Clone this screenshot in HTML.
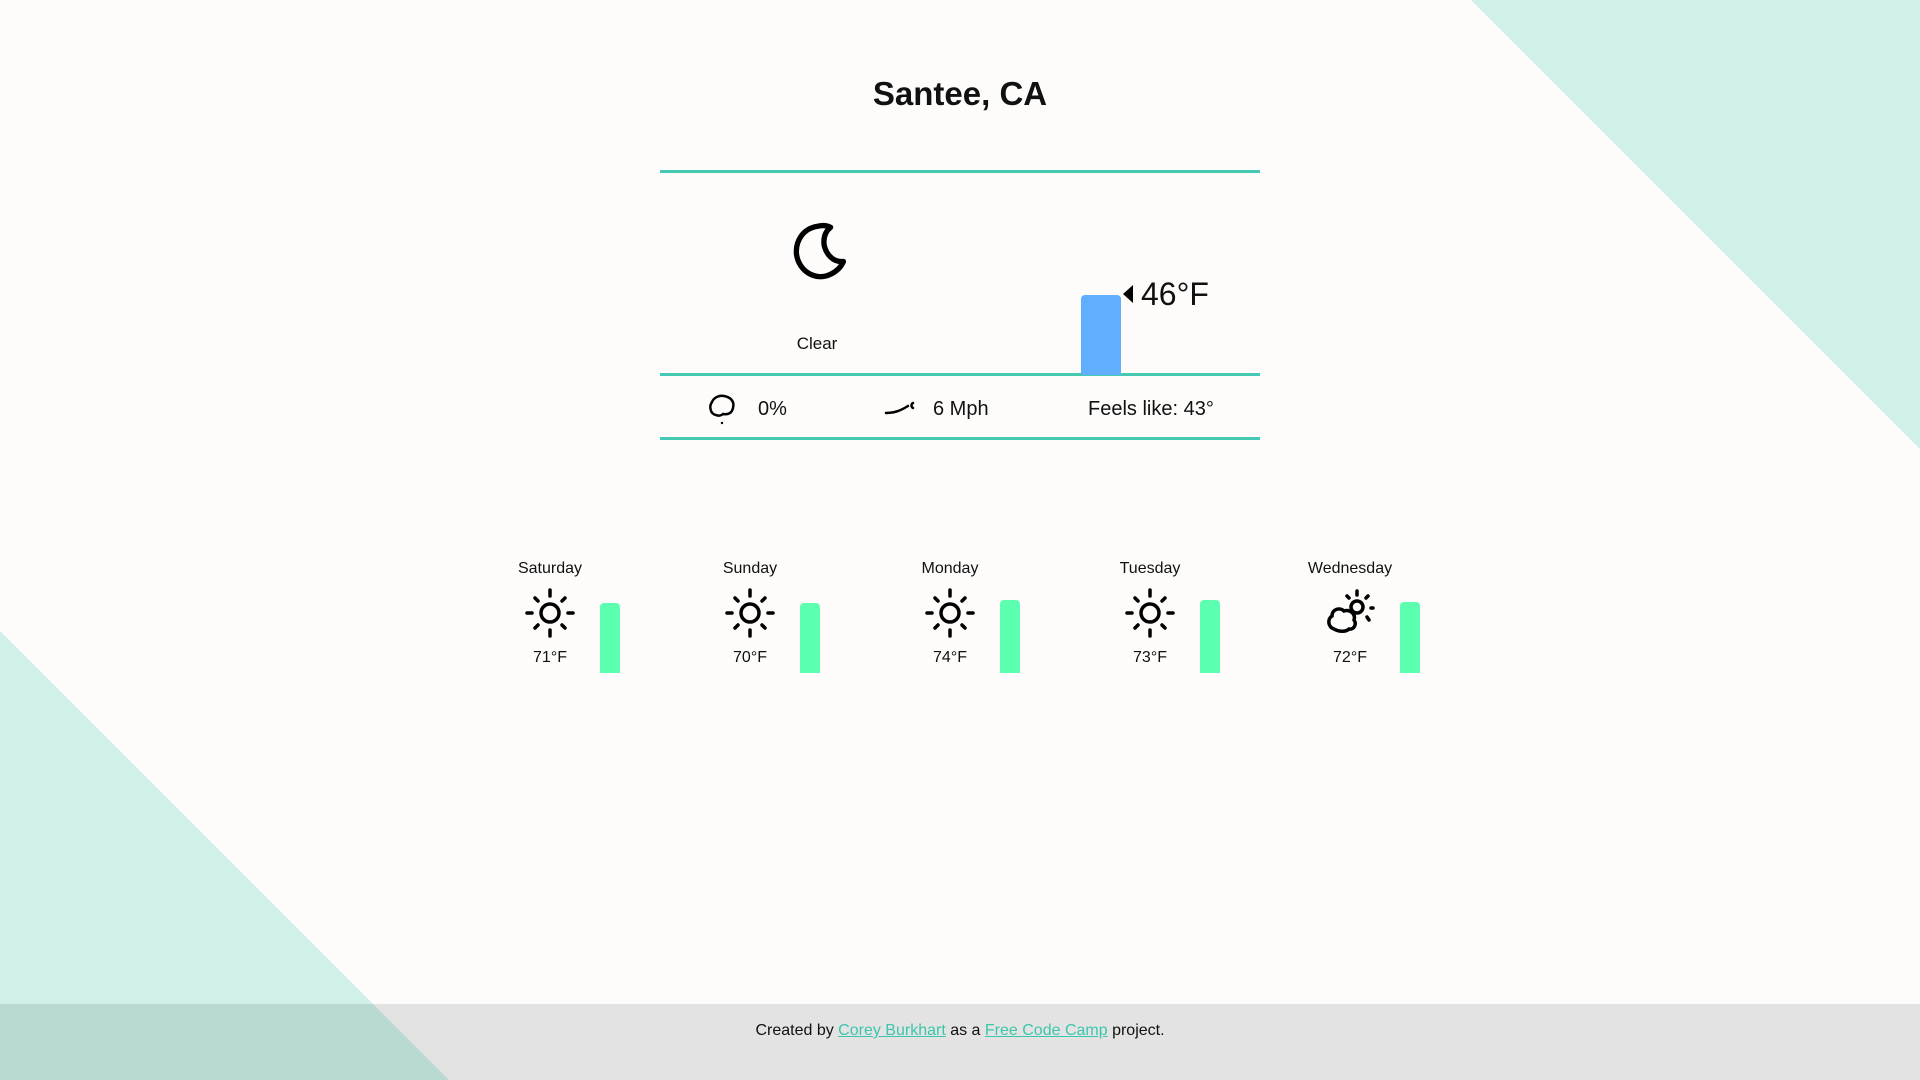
<!DOCTYPE html>
<html><head><meta charset="utf-8"><style>
html,body{margin:0;padding:0;}
body{width:1920px;height:1080px;position:relative;overflow:hidden;background:#fdfcfb;font-family:"Liberation Sans",sans-serif;color:#111;}
.abs{position:absolute;}
h1{position:absolute;top:75px;left:0;width:1920px;text-align:center;margin:0;font-size:33px;font-weight:bold;}
.line{position:absolute;left:660px;width:600px;height:3px;background:#45c9b1;}
.c{position:absolute;text-align:center;}
.footer{position:absolute;left:0;top:1004px;width:1920px;height:76px;background:#e3e3e3;}
.ft{position:absolute;top:1022px;width:1920px;text-align:center;font-size:16px;}
.ft a{color:#3cc6ac;text-decoration:underline;}
.bar{position:absolute;width:20px;background:#5cffb0;border-radius:4px 4px 0 0;}
</style></head><body>
<svg class="abs" style="left:0;top:0" width="1920" height="1080">
<polygon points="1471,0 1920,0 1920,449" fill="#d0f0e9"/>
<polygon points="0,631 449,1080 0,1080" fill="#d0f0e9"/>
</svg>
<div class="footer"></div>
<svg class="abs" style="left:0;top:0" width="1920" height="1080">
<polygon points="0,1004 373,1004 449,1080 0,1080" fill="#b9d9d3"/>
</svg>
<div class="ft">Created by <a>Corey Burkhart</a> as a <a>Free Code Camp</a> project.</div>

<h1>Santee, CA</h1>
<div class="line" style="top:170px"></div>
<div class="line" style="top:373px"></div>
<div class="line" style="top:437px"></div>

<svg class="abs" style="left:790px;top:222px" width="62" height="64" viewBox="0 0 54 60">
<path d="M24 4 C10 6 3 18 4 30 C6 46 22 56 36 49 C42 46 46 42 48 37 C38 38 32 30 30 22 C29 15 31 9 36 5 C32 3 28 3 24 4 Z" fill="none" stroke="#000" stroke-width="5" stroke-linejoin="round"/>
</svg>
<div class="c" style="left:760px;top:334px;width:114px;font-size:17px;">Clear</div>

<div class="abs" style="left:1081px;top:295px;width:40px;height:80px;background:#60aefe;border-radius:4px 4px 0 0;"></div>
<svg class="abs" style="left:1121px;top:284px" width="14" height="20"><polygon points="12,1 12,19 2,10" fill="#000"/></svg>
<div class="abs" style="left:1141px;top:276px;font-size:32px;">46°F</div>

<svg class="abs" style="left:708px;top:393px" width="28" height="32" viewBox="0 0 28 32">
<path d="M8 22 C2 21 1 13 4 9 C6 4 12 2 16 3 C22 4 27 8 25 15 C24 20 20 22 15 21 C13 23 10 23 8 22 Z" fill="none" stroke="#000" stroke-width="2.5"/>
<circle cx="14" cy="30" r="1.2" fill="#000"/>
</svg>
<div class="abs" style="left:758px;top:398px;font-size:20px;">0%</div>
<svg class="abs" style="left:884px;top:398px" width="32" height="20" viewBox="0 0 32 20">
<path d="M2 15 C10 15 16 13 24 8" fill="none" stroke="#000" stroke-width="2.5" stroke-linecap="round"/>
<path d="M29 5 C27 6 27 9 29 10" fill="none" stroke="#000" stroke-width="2.5" stroke-linecap="round"/>
</svg>
<div class="abs" style="left:933px;top:398px;font-size:20px;">6 Mph</div>
<div class="abs" style="left:1088px;top:398px;font-size:20px;">Feels like: 43°</div>

<div class="c" style="left:490px;top:560px;width:120px;font-size:16px;">Saturday</div>
<div class="c" style="left:690px;top:560px;width:120px;font-size:16px;">Sunday</div>
<div class="c" style="left:890px;top:560px;width:120px;font-size:16px;">Monday</div>
<div class="c" style="left:1090px;top:560px;width:120px;font-size:16px;">Tuesday</div>
<div class="c" style="left:1290px;top:560px;width:120px;font-size:16px;">Wednesday</div>

<svg width="0" height="0" style="position:absolute"><defs>
<g id="sun" fill="none" stroke="#000" stroke-width="3.5" stroke-linecap="round">
<circle cx="25" cy="25" r="9"/>
<line x1="25" y1="2" x2="25" y2="8"/><line x1="25" y1="42" x2="25" y2="48"/>
<line x1="2" y1="25" x2="7" y2="25"/><line x1="43" y1="25" x2="48" y2="25"/>
<line x1="10" y1="10" x2="13" y2="13"/><line x1="37" y1="37" x2="40" y2="40"/>
<line x1="40" y1="10" x2="37" y2="13"/><line x1="13" y1="37" x2="10" y2="40"/>
</g></defs></svg>
<svg class="abs" style="left:525px;top:588px" width="50" height="50"><use href="#sun"/></svg>
<svg class="abs" style="left:725px;top:588px" width="50" height="50"><use href="#sun"/></svg>
<svg class="abs" style="left:925px;top:588px" width="50" height="50"><use href="#sun"/></svg>
<svg class="abs" style="left:1125px;top:588px" width="50" height="50"><use href="#sun"/></svg>
<svg class="abs" style="left:1324px;top:587px" width="52" height="50" viewBox="0 0 52 50">
<g fill="none" stroke="#000" stroke-width="3.5" stroke-linecap="round">
<circle cx="33" cy="20" r="6"/>
<line x1="33" y1="4" x2="33" y2="8"/><line x1="44" y1="9" x2="42" y2="11"/><line x1="47" y1="21" x2="49" y2="21"/><line x1="43" y1="30" x2="45" y2="33"/><line x1="23" y1="9" x2="25" y2="11"/>
<path d="M10 42 C4 40 3 32 8 29 C8 22 16 20 20 24 C26 22 32 27 30 33 C33 37 30 43 25 42 C22 45 15 45 10 42 Z" fill="#fdfcfb"/>
</g></svg>

<div class="c" style="left:490px;top:649px;width:120px;font-size:16px;">71°F</div>
<div class="c" style="left:690px;top:649px;width:120px;font-size:16px;">70°F</div>
<div class="c" style="left:890px;top:649px;width:120px;font-size:16px;">74°F</div>
<div class="c" style="left:1090px;top:649px;width:120px;font-size:16px;">73°F</div>
<div class="c" style="left:1290px;top:649px;width:120px;font-size:16px;">72°F</div>

<div class="bar" style="left:600px;top:603px;height:70px"></div>
<div class="bar" style="left:800px;top:603px;height:70px"></div>
<div class="bar" style="left:1000px;top:600px;height:73px"></div>
<div class="bar" style="left:1200px;top:600px;height:73px"></div>
<div class="bar" style="left:1400px;top:602px;height:71px"></div>
</body></html>
